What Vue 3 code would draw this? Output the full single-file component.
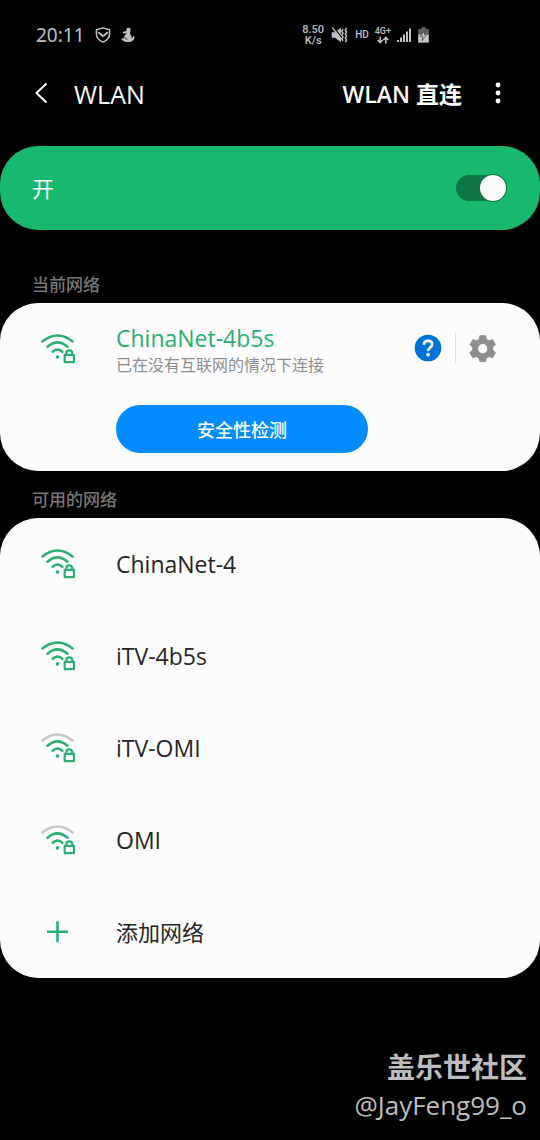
<script setup>
import { ref } from 'vue'

const enabled = ref(true)
const networks = [
  { name: 'ChinaNet-4', strong: true },
  { name: 'iTV-4b5s', strong: true },
  { name: 'iTV-OMI', strong: false },
  { name: 'OMI', strong: false },
]
</script>

<template>
  <div class="screen">
    <div class="status">
      <time class="clock">20:11</time>
      <svg class="shield" width="16" height="16" viewBox="0 0 16 16" fill="none" stroke="currentColor" stroke-width="1.5" stroke-linejoin="round">
        <path d="M8 .9 14.6 2.8V7C14.6 10.5 11.5 13.5 8 15.1 4.5 13.5 1.4 10.5 1.4 7V2.8Z" />
        <path d="M3.2 5.2 8 9.2l4.8-4" stroke-width="1.8" />
      </svg>
      <svg class="duck" width="14" height="16" viewBox="0 0 14 16" fill="currentColor">
        <path d="M7.5.8C9.3.8 10 2 9.6 3.5 9.4 4.8 8.9 5.4 9 6.3c.2 1.2 1.7 2.3 1.5 4.5 1.3.1 1.8-.7 1.8-2.1l1.3 1c-.1 3.2-2.3 5.3-6.6 5.3-4.5 0-6.6-1.7-6.6-3.7l2.2.3C3 9.1 4.1 7.6 5.8 6.4l-4-.2.3-1.4L5.5 4C5.1 2.4 5.8.8 7.5.8Z" />
        <path d="M4 10.2c.1 1.4 1 2 2.5 2" fill="none" stroke="#000" stroke-width=".8" />
      </svg>
      <div class="status-right">
        <span class="speed"><span>8.50</span><span>K/s</span></span>
        <svg class="mute" width="17" height="16" viewBox="0 0 17 16" fill="currentColor">
          <path d="M.7 5.2h3.2L9.9.7v14.6L3.9 10.8H.7Z" />
          <path d="M3 .4 10.6 10.4" stroke="#000" stroke-width="1.2" />
          <path d="m1.4.6 8.8 11.6" stroke="currentColor" stroke-width="1.5" />
          <path d="m12 2-1.2 2L12 6l-1.2 2 1.2 2-1.2 2 1.2 2M15.5 1l-1.2 2 1.2 2-1.2 2 1.2 2-1.2 2 1.2 2-1.2 2" fill="none" stroke="currentColor" stroke-width="1.5" />
        </svg>
        <span class="hd">HD</span>
        <span class="mobile">
          <span>4G+</span>
          <svg width="12" height="8" viewBox="0 0 12 8" fill="none" stroke="currentColor" stroke-width="1.6">
            <path d="M3.2.5v6M.7 4l2.5 2.6L5.7 4M8.8 7.5v-6M6.3 4l2.5-2.6L11.3 4" />
          </svg>
        </span>
        <svg class="bars" width="15" height="15" viewBox="0 0 15 15" fill="currentColor">
          <path d="M0 12h2v2H0zM3 9.5h2V14H3zM6 6.5h2V14H6zM9 3.5h2V14H9zM12 .5h2V14h-2z" />
        </svg>
        <svg width="11" height="16" viewBox="0 0 11 16">
          <path d="M3.3.3h4.4V2h3v13.5H.3V2h3Z" fill="#626262" />
          <path d="M.3 7.5h10.4v8H.3Z" fill="#c7c7c7" />
          <path d="M7.2 3.2 2.4 9.3h2.4L4 13.7l4.7-6H6.2Z" fill="#d0d0d0" stroke="#333" stroke-width=".7" />
        </svg>
      </div>
    </div>

    <header class="header">
      <button class="icon-button back" aria-label="返回">
        <svg width="16" height="24" viewBox="0 0 16 24" fill="none" stroke="currentColor" stroke-width="2">
          <path d="M13.5 1.5 3.5 11l10 9.5" />
        </svg>
      </button>
      <h1 class="title">WLAN</h1>
      <button class="direct">WLAN 直连</button>
      <button class="icon-button more" aria-label="更多">
        <svg width="8" height="24" viewBox="0 0 8 24" fill="currentColor">
          <circle cx="4" cy="3" r="2.4" /><circle cx="4" cy="11" r="2.4" /><circle cx="4" cy="19" r="2.4" />
        </svg>
      </button>
    </header>

    <label class="master">
      <span>开</span>
      <input v-model="enabled" class="switch" type="checkbox" role="switch" />
    </label>

    <h2 class="section current-title">当前网络</h2>
    <section class="card current">
      <svg class="wifi" width="36" height="34" viewBox="0 2 36 34" fill="none" stroke="#2aae72" stroke-width="2.5" stroke-linecap="round">
        <path d="M2.4 11.5Q17.5-.6 32.6 11.5" /><path d="M7.5 16.8Q17.5 8 27.5 16.8" /><path d="M12.6 21.7Q17.5 17.4 22.4 21.7" />
        <circle cx="17.5" cy="27" r="1.8" fill="#2aae72" stroke="none" />
        <path d="M24.7 24.8h9.2v7.4h-9.2zM26.3 24.5v-1.2a3 3 0 0 1 6 0v1.2" stroke-width="2.2" stroke-linejoin="round" />
      </svg>
      <div class="current-info">
        <p class="current-name">ChinaNet-4b5s</p>
        <p class="current-note">已在没有互联网的情况下连接</p>
        <button class="check">安全性检测</button>
      </div>
      <div class="actions">
        <button class="icon-button" aria-label="帮助">
          <svg width="28" height="28" viewBox="0 0 28 28" fill="none">
            <circle cx="14" cy="14" r="13.3" fill="#0073d7" />
            <path d="M10 10.8C10 8.1 11.6 6.8 14 6.8s4.1 1.3 4.1 3.7c0 2.9-4 3.1-4 6.6" stroke="#fff" stroke-width="2.7" />
            <circle cx="14.1" cy="20.6" r="1.9" fill="#fff" />
          </svg>
        </button>
        <span class="divider"></span>
        <button class="icon-button" aria-label="设置">
          <svg width="28" height="28" viewBox="0 0 28 28">
            <path fill="#8e8e8e" stroke="#8e8e8e" stroke-linejoin="round" stroke-width="1.2" fill-rule="evenodd" d="M11 1.8h5.4l.8 3.6 2.8 1.6 3.5-1.1 2.7 4.7-2.7 2.5v3.2l2.7 2.5-2.7 4.7-3.5-1.1-2.8 1.6-.8 3.4H11l-.8-3.4L7.4 22.4l-3.5 1.1-2.7-4.7 2.7-2.5v-3.2L1.2 10.6l2.7-4.7L7.4 7l2.8-1.6ZM13.7 9.5a5.2 5.2 0 1 0 0 10.4 5.2 5.2 0 0 0 0-10.4Z" />
          </svg>
        </button>
      </div>
    </section>

    <h2 class="section available-title">可用的网络</h2>
    <ul class="card list">
      <li v-for="network in networks" :key="network.name">
        <button class="row">
          <svg class="wifi" width="36" height="34" viewBox="0 2 36 34" fill="none" stroke="#2aae72" stroke-width="2.5" stroke-linecap="round">
            <path d="M2.4 11.5Q17.5-.6 32.6 11.5" :stroke="network.strong ? '#2aae72' : '#c8c8c8'" />
            <path d="M7.5 16.8Q17.5 8 27.5 16.8" /><path d="M12.6 21.7Q17.5 17.4 22.4 21.7" />
            <circle cx="17.5" cy="27" r="1.8" fill="#2aae72" stroke="none" />
            <path d="M24.7 24.8h9.2v7.4h-9.2zM26.3 24.5v-1.2a3 3 0 0 1 6 0v1.2" stroke-width="2.2" stroke-linejoin="round" />
          </svg>
          <span>{{ network.name }}</span>
        </button>
      </li>
      <li>
        <button class="row add">
          <svg class="wifi" width="36" height="34" viewBox="0 0 36 34" fill="none" stroke="#2aae72" stroke-width="2.6">
            <path d="M7 16.7h21M17.5 6.2v21" />
          </svg>
          <span>添加网络</span>
        </button>
      </li>
    </ul>

    <footer class="credit">
      <strong>盖乐世社区</strong>
      <span>@JayFeng99_o</span>
    </footer>
  </div>
</template>

<style>
body {
  background: #000;
}
</style>

<style scoped>
.screen {
  display: flex;
  flex-direction: column;
  min-height: 100vh;
  box-sizing: border-box;
  background: #000;
  color: #fcfcfc;
  font-family: "Open Sans", "Noto Sans CJK SC", sans-serif;
}
h1, h2, p, ul {
  margin: 0;
  padding: 0;
}
li {
  list-style: none;
}
svg {
  display: block;
  flex: none;
}
button {
  margin: 0;
  padding: 0;
  border: 0;
  background: none;
  color: inherit;
  font: inherit;
  cursor: pointer;
}
.status {
  display: flex;
  align-items: center;
  height: 70px;
  padding: 0 111px 0 36px;
  color: #c0c0c0;
}
.clock {
  font: 19px/24px "Noto Sans", sans-serif;
}
.shield {
  margin-left: 10px;
}
.duck {
  margin-left: 10px;
}
.status-right {
  display: flex;
  align-items: center;
  margin-left: auto;
}
.speed {
  display: flex;
  flex-direction: column;
  align-items: center;
  font: 500 11px/11px Roboto, sans-serif;
}
.mute {
  margin-left: 7px;
}
.hd {
  margin-left: 7px;
  font: 500 10px/12px Roboto, sans-serif;
}
.mobile {
  display: flex;
  flex-direction: column;
  align-items: center;
  margin: 0 6px;
  font: 500 9px/10px Roboto, sans-serif;
}
.bars {
  margin-right: 6px;
}
.header {
  display: flex;
  align-items: center;
  height: 48px;
  padding: 0 38px 0 33px;
}
.icon-button {
  display: flex;
}
.title {
  margin-left: 25px;
  font-size: 25px;
  line-height: 32px;
  font-weight: 400;
}
.direct {
  margin-left: auto;
  font-size: 23px;
  line-height: 32px;
  font-weight: 600;
}
.more {
  margin-left: 32px;
}
.master {
  display: flex;
  align-items: center;
  justify-content: space-between;
  height: 84px;
  margin-top: 28px;
  padding: 0 34px 0 32px;
  border-radius: 38px;
  background: #18b86e;
  font-size: 22px;
  line-height: 32px;
}
.switch {
  appearance: none;
  display: flex;
  align-items: center;
  width: 50px;
  height: 26px;
  margin: 0;
  border-radius: 13px;
  background: #0e7545;
}
.switch::before {
  content: "";
  width: 26px;
  height: 26px;
  flex: none;
  border-radius: 50%;
  background: #fcfcfc;
  box-shadow: 0 0 0 1px #0e7545;
}
.switch:checked {
  justify-content: flex-end;
}
.section {
  padding: 0 32px;
  color: #777;
  font-size: 17px;
  line-height: 24px;
  font-weight: 500;
  font-family: "Noto Sans CJK SC", sans-serif;
}
.current-title {
  margin: 42px 0 7px;
}
.available-title {
  margin: 16px 0 7px;
}
.card {
  border-radius: 38px;
  background: #fcfcfc;
}
.current {
  display: flex;
  align-items: flex-start;
  padding: 20px 43px 18px 40px;
}
.wifi {
  margin-right: 40px;
}
.current > .wifi {
  margin-top: 9px;
}
.current-name {
  color: #2aae72;
  font-size: 23px;
  line-height: 30px;
}
.current-note {
  color: #8e8e8e;
  font-size: 16px;
  line-height: 24px;
}
.check {
  width: 252px;
  height: 48px;
  margin-top: 28px;
  border-radius: 24px;
  background: #038cff;
  color: #fff;
  font: 500 18px/24px "Noto Sans CJK SC", sans-serif;
}
.actions {
  display: flex;
  align-items: center;
  gap: 13px;
  margin: 10px 0 0 auto;
}
.divider {
  width: 1px;
  height: 30px;
  background: #dedede;
}
.current-info {
  display: flex;
  flex-direction: column;
  align-items: flex-start;
}
.row {
  display: flex;
  align-items: center;
  width: 100%;
  height: 92px;
  padding: 0 40px;
  color: #252525;
  font-size: 23px;
  line-height: 32px;
}
.add {
  font-size: 22px;
}
.credit {
  display: flex;
  flex-direction: column;
  align-items: flex-end;
  margin-top: auto;
  padding: 40px 13px 16px;
  color: #bdbdbd;
  font-size: 26px;
  line-height: 38px;
}
.credit strong {
  font-size: 28px;
  font-weight: 700;
}
</style>
